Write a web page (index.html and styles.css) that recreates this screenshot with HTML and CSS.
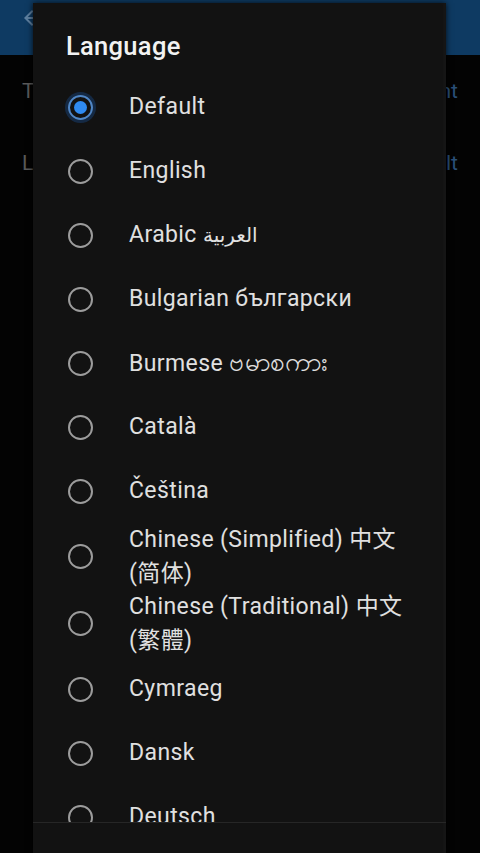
FILE: index.html
```html
<!DOCTYPE html>
<html lang="en">
<head>
  <meta charset="UTF-8">
  <meta name="viewport" content="width=device-width, initial-scale=1.0">
  <title>Settings - Language</title>
  <link rel="stylesheet" href="styles.css">
</head>
<body>

  <!-- Settings screen behind the dialog -->
  <div class="app-bar">
    <svg class="back" width="24" height="24" viewBox="0 0 24 24">
      <path d="M20 11H7.8l5.6-5.6L12 4l-8 8 8 8 1.4-1.4L7.8 13H20z" fill="#5d7f9f"/>
    </svg>
  </div>
  <div class="settings">
    <div class="setting-row">
      <span class="setting-name">Theme</span>
      <span class="setting-value">Transparent</span>
    </div>
    <div class="setting-row">
      <span class="setting-name">Language</span>
      <span class="setting-value">Default</span>
    </div>
  </div>

  <!-- Language dialog -->
  <div class="dialog">
    <h2 class="dialog-title">Language</h2>

    <div class="options">
      <div class="option selected"><span class="radio"></span><span class="label">Default</span></div>
      <div class="option"><span class="radio"></span><span class="label">English</span></div>
      <div class="option"><span class="radio"></span><span class="label">Arabic <span class="ar">العربية</span></span></div>
      <div class="option"><span class="radio"></span><span class="label">Bulgarian български</span></div>
      <div class="option"><span class="radio"></span><span class="label">Burmese <span class="my">ဗမာစကား</span></span></div>
      <div class="option"><span class="radio"></span><span class="label">Català</span></div>
      <div class="option"><span class="radio"></span><span class="label">Čeština</span></div>
      <div class="option"><span class="radio"></span><span class="label">Chinese (Simplified) 中文<br>(简体)</span></div>
      <div class="option"><span class="radio"></span><span class="label">Chinese (Traditional) 中文<br>(繁體)</span></div>
      <div class="option"><span class="radio"></span><span class="label">Cymraeg</span></div>
      <div class="option"><span class="radio"></span><span class="label">Dansk</span></div>
      <div class="option"><span class="radio"></span><span class="label">Deutsch</span></div>
    </div>

    <div class="dialog-buttons"></div>
  </div>

</body>
</html>
```

FILE: styles.css
```css
body {
  margin: 0;
  padding: 0;
  width: 480px;
  height: 853px;
  overflow: hidden;
  background: #030303;
  font-family: Roboto, "DejaVu Sans", "Noto Sans CJK SC", sans-serif;
  position: relative;
}

.app-bar {
  height: 55px;
  background: #0e3a62;
  display: flex;
  align-items: center;
  padding-left: 20px;
}

.back {
  margin-top: -20px;
}

.setting-row {
  display: flex;
  justify-content: space-between;
  align-items: center;
  height: 72px;
  padding: 0 22px;
  font-size: 21px;
}

.setting-name {
  color: #5a5a5a;
}

.setting-value {
  color: #2a4f78;
}

.dialog {
  position: absolute;
  left: 33px;
  top: 3px;
  width: 413px;
  height: 850px;
  background: #121212;
  box-shadow: 0 0 6px rgba(0, 0, 0, 0.8), inset -3px 0 3px rgba(255, 255, 255, 0.02);
  display: flex;
  flex-direction: column;
}

.dialog-title {
  margin: 0;
  padding: 28px 0 0 33px;
  height: 44px;
  font-size: 25.5px;
  line-height: 30px;
  font-weight: 500;
  color: #f2f2f2;
  letter-spacing: 0.3px;
}

.options {
  height: 747px;
  overflow: hidden;
  flex-shrink: 0;
}

.option {
  display: flex;
  align-items: center;
  min-height: 64px;
  padding-left: 35px;
}

.radio {
  width: 21px;
  height: 21px;
  border: 2.5px solid #9c9c9c;
  border-radius: 50%;
  flex-shrink: 0;
  margin-right: 36px;
  box-sizing: content-box;
  position: relative;
}

.option.selected .radio {
  border-color: #4f86c6;
  box-shadow: 0 0 0 3px rgba(25, 70, 130, 0.45);
}

.option.selected .radio::after {
  content: "";
  position: absolute;
  left: 4px;
  top: 4px;
  width: 13px;
  height: 13px;
  border-radius: 50%;
  background: #2f8af0;
}

.label {
  font-size: 23px;
  line-height: 33.5px;
  color: #e0e0e0;
  letter-spacing: 0.4px;
}

.ar {
  font-family: "DejaVu Sans", sans-serif;
  font-size: 20px;
}

.my {
  font-size: 26px;
}

.dialog-buttons {
  border-top: 1px solid #262626;
  flex: 1;
}
```
